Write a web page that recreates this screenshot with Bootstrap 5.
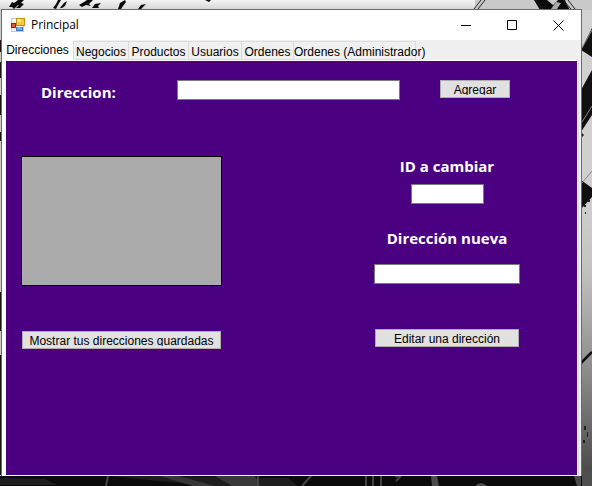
<!DOCTYPE html>
<html lang="es">
<head>
<meta charset="utf-8">
<title>Principal</title>
<link href="https://cdn.jsdelivr.net/npm/bootstrap@5.3.0/dist/css/bootstrap.min.css" rel="stylesheet">
<style>
body{width:592px;height:486px;background:#1a1a1a;color:#000;font-family:"Liberation Sans",Arial,sans-serif;font-size:12px;line-height:14px}
.wallpaper{left:0;top:0;z-index:0}
.app-window{z-index:1;margin:9px 0 0 1px;width:581px;height:467px;border:1px solid #6b6b6b;border-bottom:0;background:#f0f0f0}
.title-bar{height:30px;background:#fff;padding-left:9px}
.app-title{font-family:"Open Sans","Noto Sans",sans-serif;font-size:12px;letter-spacing:-.06px;margin-left:6px}
.win-controls{gap:35px;margin-right:17px}
.tab-strip{height:20px;padding-top:1px}
.tab-strip .nav-link{height:19px;padding:3px 0 0;border:1px solid #dcdcdc;border-left:0;border-radius:0;background:#f0f0f0;color:#000;text-align:center;white-space:nowrap;line-height:14px}
.tab-strip .nav-link.active{height:20px;margin-top:-1px;background:#fff;border-color:#fff #dcdcdc #fff #fff;padding-top:2px}
.tab-page{height:416px;width:576px;background:#4b0082;border:solid #fff;border-width:1px 1px 1px 4px;outline:0;box-shadow:1px 0 #dcdcdc}
.form-row{height:95px;padding:19px 0 0 35px}
.form-lbl{font-family:"Open Sans","Noto Sans",sans-serif;font-weight:700;font-size:15px;line-height:20px;color:#fff;white-space:nowrap}
.txt{height:20px;min-height:0;padding:0 3px;border:1px solid #7a7a7a;border-radius:0;background:#fff;font-size:12px}
.push{height:18px;padding:2px 0;border:1px solid #adadad;border-radius:0;background:#e1e1e1;color:#000;font-size:12px;line-height:14px}
.push span{display:block;height:12px;overflow:hidden;line-height:14px}
.w-dir{width:223px}.w-add{width:70px}.w-id{width:73px}.w-new{width:146px}.w-edit{width:144px}.w-show{width:199px}
.lbl-dir{width:136px;padding-top:2px}
.add-gap{margin-left:40px}
.data-grid{width:201px;height:130px;background:#ababab;border:1px solid #000}
.left-col{margin-left:15px}
.right-col{margin-left:152px;width:146px}
.gap-btn{margin-top:45px}
.l1{letter-spacing:.12px}
</style>
</head>
<body class="overflow-hidden position-relative m-0">
<svg class="wallpaper position-absolute" width="592" height="486" aria-hidden="true">
<defs>
<linearGradient id="sky" x1="0" y1="0" x2="0" y2="1"><stop offset="0" stop-color="#f4f4f4"/><stop offset="1" stop-color="#d4d4d4"/></linearGradient>
<linearGradient id="side" x1="0" y1="0" x2="0" y2="1"><stop offset="0" stop-color="#d2d2d2"/><stop offset=".4" stop-color="#cfcfcf"/><stop offset=".55" stop-color="#c4c4c4"/><stop offset=".8" stop-color="#858585"/><stop offset="1" stop-color="#484848"/></linearGradient>
</defs>
<rect width="592" height="10" fill="url(#sky)"/>
<rect x="475" width="117" height="10" fill="#c9c9c9"/>
<g fill="#0a0a0a">
<path d="M9 7l3-5 2 1 4-3h6l-4 4 2 2-4-1-4 4-2-2zM16 8l5-5 3 1-4 4zM53 8l3-4 2-4h3l-3 5-2 4zM60 8l4-5 3-2-2 5-3 2zM79 5l5-3 3-2h6l-4 4 2 2-5-1-4 2zM92 8l3-4 6-1-3 3 1 2zM118 9l2-6 5-3 1 2-3 4-2 3zM138 9l3-4 5-1-5 5zM205 0l4 2 2-2z"/>
<path d="M534 0h13l6 5 5-5h7l2 5 3 5h-30z"/>
</g>
<g stroke="#222" fill="none" stroke-width="1"><path d="M481 0l-7 9M485 0l-7 9M563 0l8 9M568 0l7 9M536 0l7 9"/></g>
<path d="M551 9l5-7 5 1-4 6z" fill="#aaa"/>
<rect x="581" y="10" width="11" height="466" fill="url(#side)"/>
<g fill="#101010"><path d="M592 28l-11 22 11 7zM592 70l-11 20v42l11-17zM581 180l11 8v9l-11 12zM581 132l3 3-3 3z"/></g>
<path d="M582 48l10-18M582 183l10-12M582 122l10-16" stroke="#888" fill="none"/>
<path d="M581 363l11-11" stroke="#101010" stroke-width="2.5"/>
<g fill="#222"><path d="M584 205h2v2h-2zM588 200h2v2h-2zM585 212h1v2h-1zM584 426h2v4h-2zM587 432h1v5h-1zM583 440h2v3h-2z"/></g>
<rect y="9" width="2" height="467" fill="#ccc"/>
<path d="M1 40v12M1 62v16M1 95v20M1 132v9M1 292v39M1 355v120" stroke="#161616" stroke-width="2"/>
<rect y="476" width="592" height="10" fill="#0b0b0b"/>
<path d="M0 478l45 1 12 6H0zM110 476h60l90 2h28l10 8h-90z" fill="#1e1e1e"/>
<path d="M160 476h18l37 10h-22zM215 476h40l5 10h-28z" fill="#383838"/>
<path d="M108 476l-2 10M366 476v10M373 476v10M381 476v10M395 476l5 1-4 4M258 476v10M302 486l9-10" stroke="#444" stroke-width="2" fill="none"/>
<path d="M431 476h6l2 10h-7zM574 476h7v10h-4zM475 486q6-6 12 0z" fill="#4c4c4c"/>
<rect x="582" y="470" width="10" height="16" fill="#4e4e4e"/>
</svg>

<main class="app-window position-relative d-flex flex-column">
<header class="title-bar d-flex align-items-center">
<svg width="14" height="14" viewBox="0 0 14 14" shape-rendering="crispEdges" aria-hidden="true">
<rect x=".5" y=".5" width="12" height="13" fill="#f4f4f4" stroke="#c9c9c9"/>
<rect x="5" y="0" width="9" height="8" fill="#c68a1c"/><rect x="6" y="1" width="7" height="6" fill="#fcc83c"/><rect x="6" y="1" width="4" height="3" fill="#ffe693"/>
<rect x="0" y="5" width="5" height="5" fill="#991d18"/><rect x="1" y="6" width="3" height="3" fill="#e2553c"/>
<rect x="5" y="9" width="7" height="4" fill="#3e78cc"/><rect x="6" y="9" width="5" height="3" fill="#76a9ee"/>
</svg>
<span class="app-title">Principal</span>
<div class="win-controls d-flex align-items-center ms-auto">
<svg width="11" height="11"><path d="M0 5.5h10" stroke="#000"/></svg>
<svg width="11" height="11"><path d="M.5.5h9v9h-9z" fill="none" stroke="#000"/></svg>
<svg width="11" height="11"><path d="M.5.5l10 10M10.5.5l-10 10" stroke="#000"/></svg>
</div>
</header>
<nav class="nav tab-strip flex-nowrap">
<a class="nav-link active" style="width:72px"><span>Direcciones</span></a>
<a class="nav-link" style="width:55px"><span>Negocios</span></a>
<a class="nav-link" style="width:60px"><span>Productos</span></a>
<a class="nav-link" style="width:53px"><span>Usuarios</span></a>
<a class="nav-link" style="width:52px"><span>Ordenes</span></a>
<a class="nav-link" style="width:122px"><span>Ordenes (Administrador)</span></a>
</nav>
<section class="tab-page">
<div class="form-row d-flex align-items-start">
<label class="form-lbl lbl-dir" for="dir">Direccion:</label>
<input id="dir" class="form-control txt w-dir">
<button class="btn push w-add add-gap"><span>Agregar</span></button>
</div>
<div class="d-flex align-items-start">
<div class="left-col d-flex flex-column align-items-center">
<div class="data-grid"></div>
<button class="btn push w-show gap-btn"><span>Mostrar tus direcciones guardadas</span></button>
</div>
<div class="right-col d-flex flex-column align-items-center">
<label class="form-lbl" for="idc">ID a cambiar</label>
<input id="idc" class="form-control txt w-id mt-2">
<label class="form-lbl mt-4" for="nueva">Dirección nueva</label>
<input id="nueva" class="form-control txt w-new mt-3">
<button class="btn push w-edit gap-btn"><span>Editar una dirección</span></button>
</div>
</div>
</section>
</main>
<script src="https://cdn.jsdelivr.net/npm/bootstrap@5.3.0/dist/js/bootstrap.bundle.min.js"></script>
</body>
</html>
